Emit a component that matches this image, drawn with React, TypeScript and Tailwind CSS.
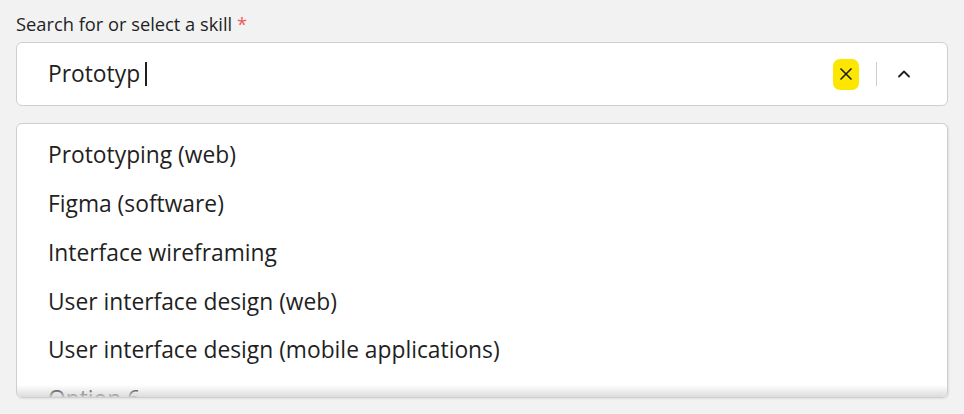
import { X, ChevronUp } from "lucide-react";

const OPTIONS = [
  "Prototyping (web)",
  "Figma (software)",
  "Interface wireframing",
  "User interface design (web)",
  "User interface design (mobile applications)",
  "Option 6",
  "Option 7",
];

export default function App() {
  return (
    <div className="min-h-screen bg-[#f2f2f2] px-4 pt-[11px] text-[#1f1f1f] font-['Open_Sans',sans-serif]">
      <label className="block text-[18.3px] leading-[26px]">
        Search for or select a skill <span className="text-[#ec5b5b]">*</span>
      </label>

      <div className="mt-[5px] flex h-[64px] items-center rounded-[6px] border border-[#cfcfcf] bg-white pl-[31px] pr-[33px]">
        <div className="flex flex-1 items-center text-[22.8px]">
          <span>Prototyp</span>
          <span className="ml-[5px] h-[24px] w-[1.5px] bg-[#1f1f1f]" />
        </div>
        <div className="flex h-[31px] w-[26px] items-center justify-center rounded-[7px] bg-[#fde700]">
          <X size={20} strokeWidth={2} className="text-[#1f1f1f]" />
        </div>
        <div className="ml-[17px] mr-[17px] h-[24px] w-px bg-[#cfcfcf]" />
        <ChevronUp size={20} strokeWidth={2.2} className="text-[#1f1f1f]" />
      </div>

      <div className="relative mt-[17px] h-[275px] overflow-hidden rounded-[6px] border border-[#cfcfcf] bg-white shadow-[1px_1px_2px_rgba(0,0,0,0.08)]">
        <ul className="pt-[7px]">
          {OPTIONS.map((o) => (
            <li key={o} className="flex h-[48.8px] items-center pl-[31px] text-[22.8px]">
              {o}
            </li>
          ))}
        </ul>
        <div className="pointer-events-none absolute inset-x-0 bottom-0 h-[12px] bg-gradient-to-b from-white/0 to-[#d8d8d8]/90" />
      </div>
    </div>
  );
}
